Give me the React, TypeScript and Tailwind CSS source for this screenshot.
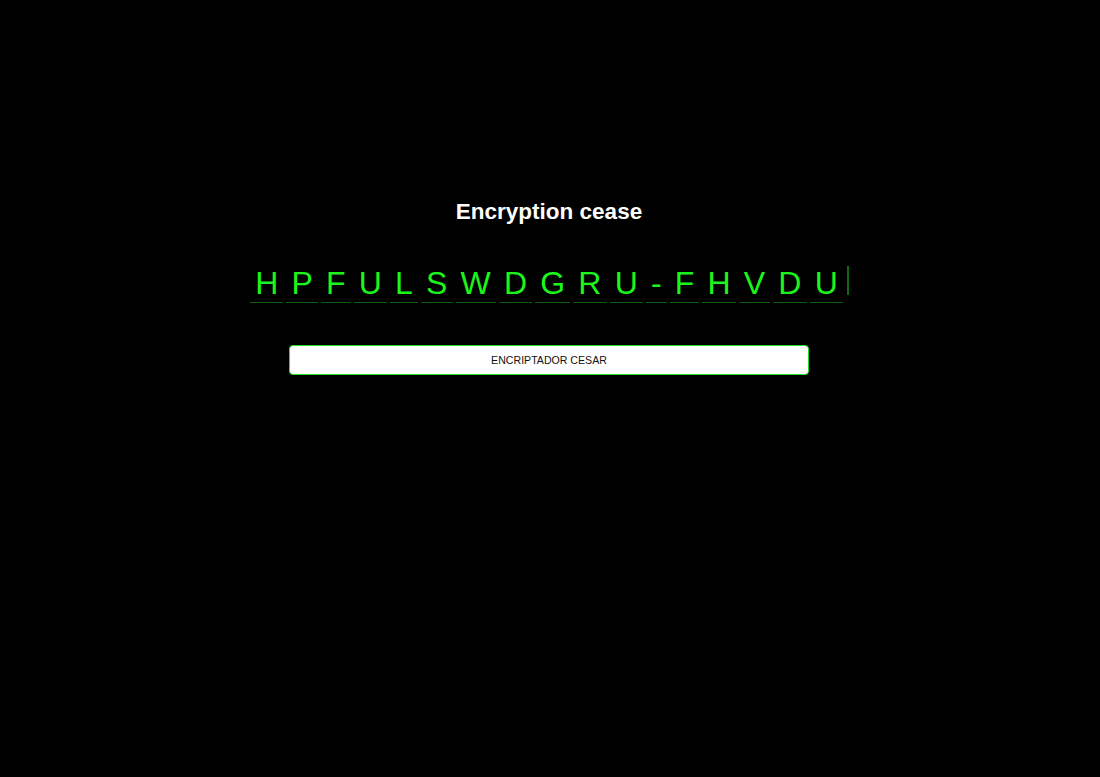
import React from 'react';

const cipher = 'HPFULSWDGRU-FHVDU'.split('');

const App: React.FC = () => {
    return (
        <div className="min-h-[777px] w-full bg-black flex flex-col items-center pt-[199px] font-['Liberation_Sans',Arial,sans-serif]">
            <h2 className="mr-[2px] text-white font-bold text-[22.5px] leading-[26px]">Encryption cease</h2>

            <div className="flex items-start mt-[42px] mr-[2px]">
                {cipher.map((letter, i) => (
                    <span
                        key={i}
                        className="block mx-[1.5px] px-[5.1px] pb-[3px] text-[32px] leading-[32px] text-[#1cf51c] border-b border-[#0b5e0b]"
                    >
                        {letter}
                    </span>
                ))}
                <span className="block ml-[3px] mt-[-1px] w-[2px] h-[29px] bg-[#0f6a0f]"></span>
            </div>

            <button
                type="button"
                className="mt-[42px] mr-[2px] w-[520px] h-[30px] pt-[2px] bg-white border border-[#22dd22] rounded-[4px] text-[10.6px] text-[#111] font-['Liberation_Sans',Arial,sans-serif]"
            >
                ENCRIPTADOR CESAR
            </button>
        </div>
    );
};

export default App;
